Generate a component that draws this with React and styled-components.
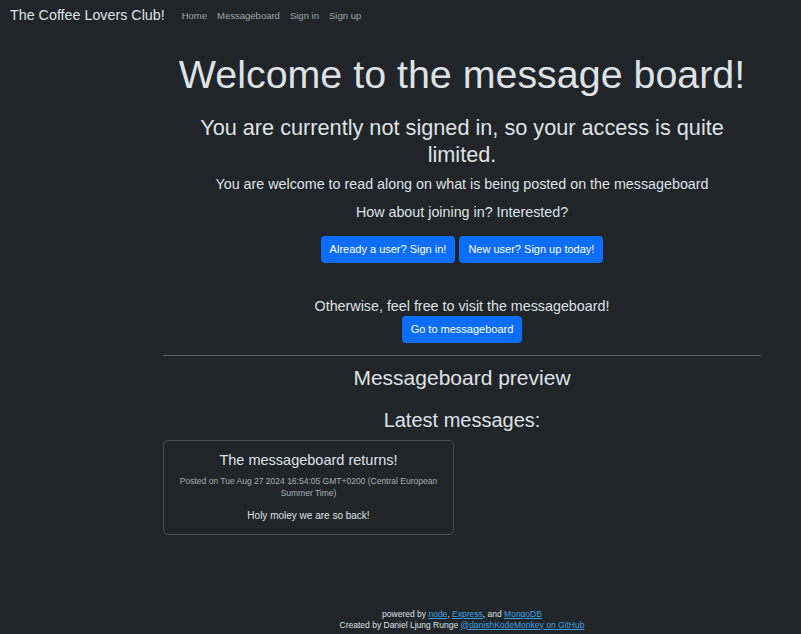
import React from 'react';
import styled, { createGlobalStyle } from 'styled-components';

const GlobalStyle = createGlobalStyle`
  html, body {
    margin: 0;
    padding: 0;
    background: #212529;
    color: #dee2e6;
    font-family: "Liberation Sans", Arial, sans-serif;
  }
  * {
    box-sizing: border-box;
  }
`;

const Page = styled.div`
  min-height: 634px;
  display: flex;
  flex-direction: column;
`;

const NavBar = styled.nav`
  display: flex;
  align-items: center;
  height: 30px;
  padding: 0 10px;
`;

const Brand = styled.a`
  font-size: 14.3px;
  color: #dee2e6;
  text-decoration: none;
  margin-right: 17px;
`;

const NavLinks = styled.div`
  display: flex;
  gap: 10px;
  padding-top: 1px;
`;

const NavLink = styled.a`
  font-size: 9.5px;
  color: rgba(222, 226, 230, 0.68);
  text-decoration: none;
`;

const Main = styled.main`
  width: 598px;
  margin-left: 163px;
  display: flex;
  flex-direction: column;
  align-items: center;
  text-align: center;
  flex: 1;
`;

const Title = styled.h1`
  font-size: 39.4px;
  font-weight: 400;
  margin: 20px 0 0;
  line-height: 48px;
`;

const Subtitle = styled.h2`
  font-size: 21.7px;
  font-weight: 400;
  line-height: 27px;
  margin: 16px 0 0;
  padding: 0 24px;
`;

const Lead = styled.p`
  font-size: 14.3px;
  line-height: 18px;
  margin: ${p => p.$top || 0}px 0 0;
`;

const ButtonRow = styled.div`
  display: flex;
  gap: 4px;
  margin-top: ${p => p.$top || 0}px;
`;

const Button = styled.a`
  display: inline-block;
  background: #0d6efd;
  color: #fff;
  font-size: 11px;
  line-height: 13px;
  padding: 7px 9px;
  border-radius: 4px;
  text-decoration: none;
`;

const Divider = styled.hr`
  width: 100%;
  border: 0;
  border-top: 1px solid #5c6065;
  margin: 12px 0 0;
`;

const SectionTitle = styled.h3`
  font-size: ${p => p.$size}px;
  font-weight: 400;
  line-height: 24px;
  margin: ${p => p.$top}px 0 0;
`;

const CardList = styled.div`
  align-self: stretch;
  display: flex;
  margin-top: 8px;
`;

const Card = styled.article`
  width: 291px;
  border: 1px solid #494e53;
  border-radius: 5px;
  padding: 10px 12px 12px;
  text-align: center;
`;

const CardTitle = styled.h5`
  font-size: 14.5px;
  font-weight: 400;
  line-height: 18px;
  margin: 0;
`;

const CardMeta = styled.p`
  font-size: 8.5px;
  line-height: 12px;
  color: rgba(222, 226, 230, 0.72);
  margin: 6px 0 0;
`;

const CardBody = styled.p`
  font-size: 10px;
  line-height: 13px;
  margin: 10px 0 0;
`;

const Footer = styled.footer`
  width: 598px;
  margin-left: 163px;
  text-align: center;
  font-size: 8.5px;
  line-height: 10.5px;
  padding-bottom: 4px;
`;

const FooterLink = styled.a`
  color: #3fa0e0;
  text-decoration: underline;
`;

export default function App() {
  return (
    <Page>
      <GlobalStyle />
      <NavBar>
        <Brand href="#">The Coffee Lovers Club!</Brand>
        <NavLinks>
          <NavLink href="#">Home</NavLink>
          <NavLink href="#">Messageboard</NavLink>
          <NavLink href="#">Sign in</NavLink>
          <NavLink href="#">Sign up</NavLink>
        </NavLinks>
      </NavBar>
      <Main>
        <Title>Welcome to the message board!</Title>
        <Subtitle>You are currently not signed in, so your access is quite limited.</Subtitle>
        <Lead $top={7}>You are welcome to read along on what is being posted on the messageboard</Lead>
        <Lead $top={10}>How about joining in? Interested?</Lead>
        <ButtonRow $top={15}>
          <Button href="#">Already a user? Sign in!</Button>
          <Button href="#">New user? Sign up today!</Button>
        </ButtonRow>
        <Lead $top={34}>Otherwise, feel free to visit the messageboard!</Lead>
        <ButtonRow $top={1}>
          <Button href="#">Go to messageboard</Button>
        </ButtonRow>
        <Divider />
        <SectionTitle $size={21} $top={10}>Messageboard preview</SectionTitle>
        <SectionTitle $size={20} $top={18}>Latest messages:</SectionTitle>
        <CardList>
          <Card>
            <CardTitle>The messageboard returns!</CardTitle>
            <CardMeta>Posted on Tue Aug 27 2024 16:54:05 GMT+0200 (Central European Summer Time)</CardMeta>
            <CardBody>Holy moley we are so back!</CardBody>
          </Card>
        </CardList>
      </Main>
      <Footer>
        <div>
          powered by <FooterLink href="#">node</FooterLink>, <FooterLink href="#">Express</FooterLink>, and{' '}
          <FooterLink href="#">MongoDB</FooterLink>
        </div>
        <div>
          Created by Daniel Ljung Runge <FooterLink href="#">@danishKodeMonkey on GitHub</FooterLink>
        </div>
      </Footer>
    </Page>
  );
}
